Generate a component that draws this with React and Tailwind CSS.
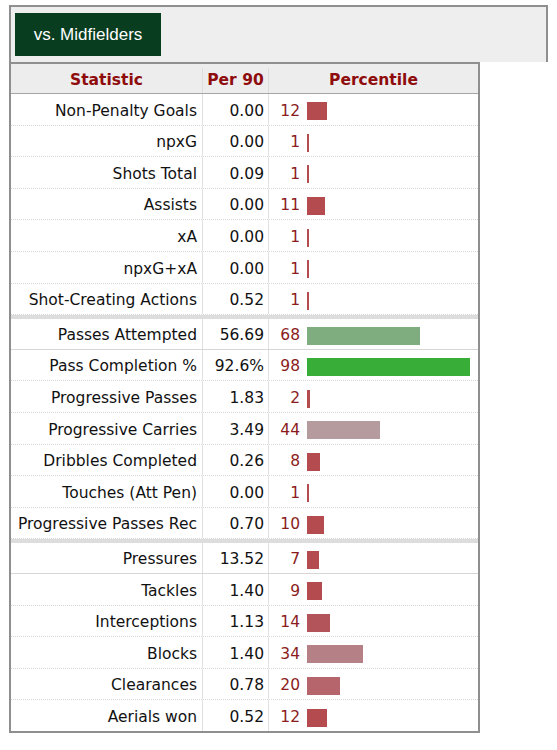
const sections = [
  [
    ["Non-Penalty Goals", "0.00", 12, "#b34b4f"],
    ["npxG", "0.00", 1, "#b34b4f"],
    ["Shots Total", "0.09", 1, "#b34b4f"],
    ["Assists", "0.00", 11, "#b34b4f"],
    ["xA", "0.00", 1, "#b34b4f"],
    ["npxG+xA", "0.00", 1, "#b34b4f"],
    ["Shot-Creating Actions", "0.52", 1, "#b34b4f"],
  ],
  [
    ["Passes Attempted", "56.69", 68, "#80ad80"],
    ["Pass Completion %", "92.6%", 98, "#38ad38"],
    ["Progressive Passes", "1.83", 2, "#b34b4f"],
    ["Progressive Carries", "3.49", 44, "#b59a9e"],
    ["Dribbles Completed", "0.26", 8, "#b34b4f"],
    ["Touches (Att Pen)", "0.00", 1, "#b34b4f"],
    ["Progressive Passes Rec", "0.70", 10, "#b34b4f"],
  ],
  [
    ["Pressures", "13.52", 7, "#b34b4f"],
    ["Tackles", "1.40", 9, "#b34b4f"],
    ["Interceptions", "1.13", 14, "#b3535a"],
    ["Blocks", "1.40", 34, "#b58086"],
    ["Clearances", "0.78", 20, "#b5656b"],
    ["Aerials won", "0.52", 12, "#b34b4f"],
  ],
];

function StatRow({ row, first, last }) {
  const [label, value, pct, color] = row;
  return (
    <div
      className={`flex ${last ? "h-[30.6px]" : "border-b border-dotted border-[#d6d6d6]"} ${
        first ? "border-t-[4px] border-t-[#dddddd] border-solid h-[34.6px]" : last ? "" : "h-[31.6px]"
      }`}
    >
      <div className="w-[192px] border-r border-solid border-r-[#e0e0e0] flex items-center justify-end pr-[5px] pt-[4px]">
        {label}
      </div>
      <div className="w-[66px] border-r border-solid border-r-[#e0e0e0] flex items-center justify-end pr-[4px] pt-[4px]">
        {value}
      </div>
      <div className="flex-1 flex items-center pt-[4px]">
        <span className="w-[31px] text-right text-[#8b1c1c]">{pct}</span>
        <span
          className="ml-[7px] h-[18px]"
          style={{ width: `${pct * 1.66}px`, backgroundColor: color }}
        />
      </div>
    </div>
  );
}

export default function App() {
  return (
    <div className="bg-white w-[557px] h-[750px] pl-[9px] pt-[5px] font-['DejaVu_Sans',sans-serif] text-[15.5px] text-[#111]">
      <div className="w-[539px] h-[57px] bg-[#eeeeee] border-t-2 border-x-2 border-[#8f8f8f] pl-[4px] pt-[6px]">
        <div className="w-[146px] h-[43px] bg-[#083d1f] text-white flex items-center justify-center font-['Liberation_Sans',Arial,sans-serif] text-[17px]">
          vs. Midfielders
        </div>
      </div>
      <div className="w-[471px] border-2 border-[#8f8f8f]">
        <div className="flex h-[30px] bg-[#ededed] border-b border-[#a5a5a5] font-bold text-[#8e0c0c] pt-[4px]">
          <div className="w-[192px] border-r border-[#dddddd] flex items-center justify-center">
            Statistic
          </div>
          <div className="w-[66px] border-r border-[#dddddd] flex items-center justify-center">
            Per 90
          </div>
          <div className="flex-1 flex items-center justify-center">Percentile</div>
        </div>
        {sections.map((rows, si) =>
          rows.map((row, ri) => (
            <StatRow
              key={row[0]}
              row={row}
              first={si > 0 && ri === 0}
              last={si === sections.length - 1 && ri === rows.length - 1}
            />
          ))
        )}
      </div>
    </div>
  );
}
